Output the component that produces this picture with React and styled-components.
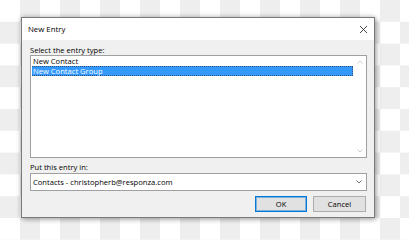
import styled, { createGlobalStyle } from "styled-components";

const Global = createGlobalStyle`
  html, body { margin: 0; padding: 0; }
  body {
    width: 409px;
    height: 240px;
    overflow: hidden;
    background: repeating-conic-gradient(#eeeeee 0 25%, #ffffff 0 50%) 0 0 / 40px 43.6px;
    font-family: "Open Sans", "Liberation Sans", sans-serif;
  }
`;

const Page = styled.div`
  padding: 17px 0 0 21px;
`;

const Dialog = styled.div`
  width: 354px;
  height: 201px;
  box-sizing: border-box;
  border: 1px solid #7a7a7a;
  background: #f0f0f0;
  display: flex;
  flex-direction: column;
  box-shadow: 0 0 5px rgba(0, 0, 0, 0.28), 2px 2px 5px rgba(0, 0, 0, 0.2);
`;

const TitleBar = styled.div`
  height: 22px;
  background: #ffffff;
  display: flex;
  align-items: center;
  justify-content: space-between;
  padding: 0 6px 0 6px;
  font-size: 7.8px;
  color: #000;
`;

const Body = styled.div`
  flex: 1;
  display: flex;
  flex-direction: column;
  padding: 5px 7px 5px 8px;
`;

const Label = styled.div`
  height: 10px;
  line-height: 10px;
  font-size: 7.6px;
  color: #000;
  margin-top: ${(p) => p.$top || 0}px;
  margin-bottom: ${(p) => p.$bottom || 0}px;
`;

const ListBox = styled.div`
  height: 103px;
  box-sizing: border-box;
  border: 1px solid #a0a0a0;
  background: #fff;
  display: flex;
`;

const Items = styled.div`
  flex: 1;
  padding-left: 1px;
`;

const Item = styled.div`
  height: 10px;
  line-height: 9px;
  box-sizing: border-box;
  font-size: 7.6px;
  padding-left: 1px;
  color: ${(p) => (p.$selected ? "#fff" : "#000")};
  background: ${(p) => (p.$selected ? "#3399ff" : "transparent")};
  border: 1px dotted ${(p) => (p.$selected ? "#33507a" : "transparent")};
  border-left: none;
  border-right: 1px dotted ${(p) => (p.$selected ? "#33507a" : "transparent")};
`;

const ScrollBar = styled.div`
  width: 13px;
  display: flex;
  flex-direction: column;
  justify-content: space-between;
  align-items: center;
  padding: 4px 0 4px;
`;

const Combo = styled.div`
  height: 18px;
  box-sizing: border-box;
  border: 1px solid #a0a0a0;
  background: #fff;
  display: flex;
  align-items: center;
  justify-content: space-between;
  padding: 0 4px 0 2px;
  font-size: 7.6px;
  color: #000;
`;

const ButtonRow = styled.div`
  display: flex;
  justify-content: flex-end;
  gap: 6px;
  margin-top: 5px;
  padding-right: 1px;
`;

const Button = styled.button`
  width: ${(p) => p.$w}px;
  height: 16px;
  box-sizing: border-box;
  padding: 0;
  margin: 0;
  font-family: "Open Sans", "Liberation Sans", sans-serif;
  font-size: 7.6px;
  color: #000;
  background: #e1e1e1;
  border: 1px solid ${(p) => (p.$default ? "#0078d7" : "#adadad")};
  box-shadow: ${(p) => (p.$default ? "inset 0 0 0 1px rgba(0,120,215,0.45)" : "none")};
`;

function Chevron({ up, color, w = 6 }) {
  return (
    <svg width={w} height="4" viewBox="0 0 6 4">
      <path
        d={up ? "M0.5 3.5 L3 1 L5.5 3.5" : "M0.5 0.5 L3 3 L5.5 0.5"}
        fill="none"
        stroke={color}
        strokeWidth="0.9"
      />
    </svg>
  );
}

export default function App() {
  return (
    <>
      <Global />
      <Page>
        <Dialog>
          <TitleBar>
            <span>New Entry</span>
            <svg width="9" height="9" viewBox="0 0 9 9">
              <path d="M1 1 L8 8 M8 1 L1 8" stroke="#333" strokeWidth="0.9" />
            </svg>
          </TitleBar>
          <Body>
            <Label>Select the entry type:</Label>
            <ListBox>
              <Items>
                <Item>New Contact</Item>
                <Item $selected>New Contact Group</Item>
              </Items>
              <ScrollBar>
                <Chevron up color="#c4c4c4" />
                <Chevron color="#c4c4c4" />
              </ScrollBar>
            </ListBox>
            <Label $top={4} $bottom={1}>Put this entry in:</Label>
            <Combo>
              <span>Contacts - christopherb@responza.com</span>
              <Chevron color="#606060" />
            </Combo>
            <ButtonRow>
              <Button $w={52} $default>OK</Button>
              <Button $w={53}>Cancel</Button>
            </ButtonRow>
          </Body>
        </Dialog>
      </Page>
    </>
  );
}
